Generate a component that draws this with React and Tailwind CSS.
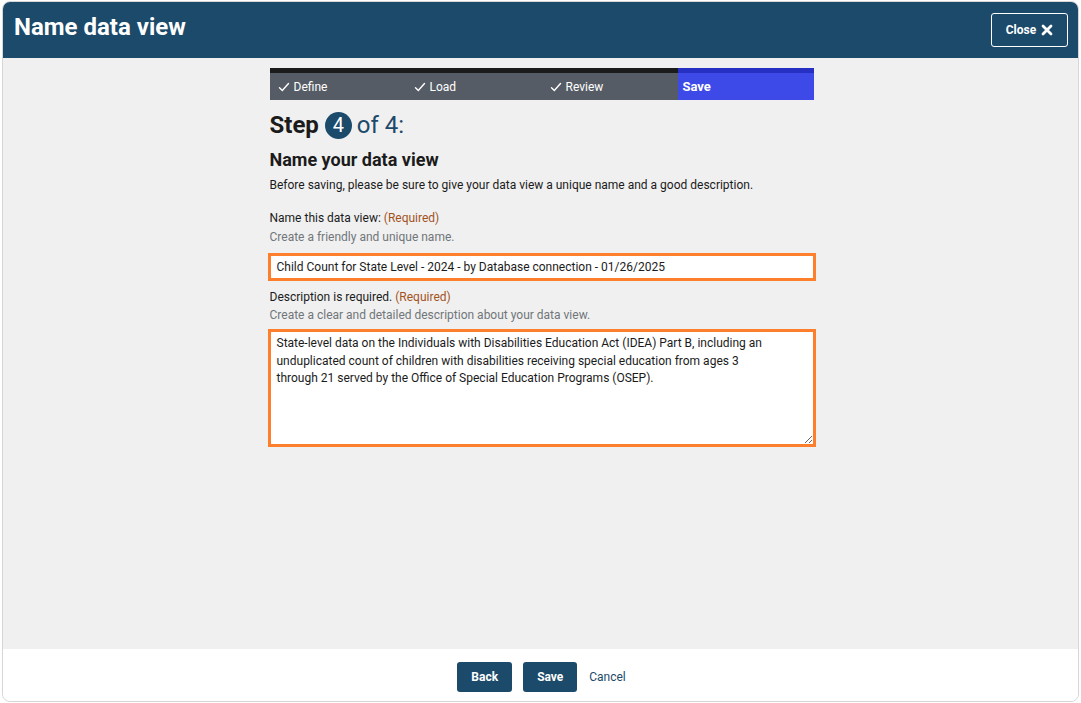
import React, { useState } from 'react';

const steps = ['Define', 'Load', 'Review', 'Save'];

const Check = () => (
  <svg width="12" height="12" viewBox="0 0 12 12" fill="none" stroke="currentColor" strokeWidth="1.4" strokeLinecap="round">
    <path d="M1.5 6.8 L4.3 9.5 L10.5 2.5" />
  </svg>
);

const App = () => {
  const [name, setName] = useState('Child Count for State Level - 2024 - by Database connection - 01/26/2025');
  const [desc, setDesc] = useState(
    'State-level data on the Individuals with Disabilities Education Act (IDEA) Part B, including an unduplicated count of children with disabilities receiving special education from ages 3 through 21 served by the Office of Special Education Programs (OSEP).'
  );

  return (
    <div className="h-[703px] w-full bg-white px-[2px] pt-[1px] pb-[1px]" style={{ fontFamily: 'Roboto, "Liberation Sans", sans-serif' }}>
      <div className="flex h-full flex-col overflow-hidden rounded-lg border border-[#d6d6d6] bg-[#f0f0f0]">
        {/* header */}
        <div className="flex h-[56px] shrink-0 items-start justify-between bg-[#1c4a6a] pl-[11px] pr-[10px]">
          <h1 className="mt-[9px] text-[24px] font-bold leading-[32px] text-white">Name data view</h1>
          <button className="mt-[11px] flex h-[34px] w-[77px] items-center justify-center gap-[5px] rounded-[3px] border border-white text-[12px] font-bold text-white">
            Close
            <svg width="12" height="12" viewBox="0 0 12 12" stroke="currentColor" strokeWidth="2.8" strokeLinecap="round">
              <path d="M2 2 L10 10 M10 2 L2 10" />
            </svg>
          </button>
        </div>

        {/* body */}
        <div className="flex flex-1 justify-center pt-[10px] pl-[2px]">
          <div className="w-[544px]">
            <div className="grid grid-cols-4">
              {steps.map((s, i) => {
                const active = i === 3;
                return (
                  <div key={s} className="flex flex-col">
                    <div className={`h-[5px] ${active ? 'bg-[#2631c4]' : 'bg-[#1b1b1b]'}`} />
                    <div className={`flex h-[27px] items-center gap-[4px] pt-[1px] text-[12px] text-white ${active ? 'bg-[#3d4ae8] pl-[5px] text-[13px] font-bold' : 'bg-[#565c65] pl-[8px]'}`}>
                      {!active && <Check />}
                      {s}
                    </div>
                  </div>
                );
              })}
            </div>

            <div className="mt-[10px] flex items-center text-[24px] leading-[30px]">
              <span className="font-bold text-[#1b1b1b]">Step</span>
              <span className="ml-[6px] flex h-[27px] w-[27px] items-center justify-center rounded-full bg-[#1c4a6a] text-[20px] text-white">4</span>
              <span className="ml-[5px] text-[#1c4a6a]">of 4:</span>
            </div>

            <h2 className="mt-[8px] text-[18px] font-bold leading-[24px] text-[#1b1b1b]">Name your data view</h2>
            <p className="mt-[5px] text-[12px] leading-[17px] text-[#1b1b1b]">
              Before saving, please be sure to give your data view a unique name and a good description.
            </p>

            <div className="mt-[16px] text-[12px] leading-[17px] text-[#1b1b1b]">
              Name this data view: <span className="text-[#a2531e]">(Required)</span>
            </div>
            <div className="mt-[2px] text-[12px] leading-[17px] text-[#71767a]">Create a friendly and unique name.</div>
            <input
              value={name}
              onChange={(e) => setName(e.target.value)}
              className="mt-[7px] -ml-[2px] block h-[28px] w-[548px] border-[3px] border-[#fd7f2c] bg-white px-[6px] text-[12px] text-[#1b1b1b] outline-none"
            />

            <div className="mt-[8px] text-[12px] leading-[17px] text-[#1b1b1b]">
              Description is required. <span className="text-[#a2531e]">(Required)</span>
            </div>
            <div className="mt-[1px] text-[12px] leading-[17px] text-[#71767a]">Create a clear and detailed description about your data view.</div>
            <textarea
              value={desc}
              onChange={(e) => setDesc(e.target.value)}
              className="mt-[5px] -ml-[2px] block h-[118px] w-[548px] border-[3px] border-[#fd7f2c] bg-white py-[3px] pl-[6px] pr-[38px] text-[12px] leading-[17.5px] text-[#1b1b1b] outline-none"
            />
          </div>
        </div>

        {/* footer */}
        <div className="flex h-[52px] shrink-0 items-center justify-center gap-[11px] bg-white pt-[3px] pl-[2px]">
          <button className="h-[30px] w-[55px] rounded-[3px] bg-[#1c4a6a] text-[12px] font-bold text-white">Back</button>
          <button className="h-[30px] w-[54px] rounded-[3px] bg-[#1c4a6a] text-[12px] font-bold text-white">Save</button>
          <button className="ml-[1px] text-[12px] text-[#1c4a6a]">Cancel</button>
        </div>
      </div>
    </div>
  );
};

export default App;
